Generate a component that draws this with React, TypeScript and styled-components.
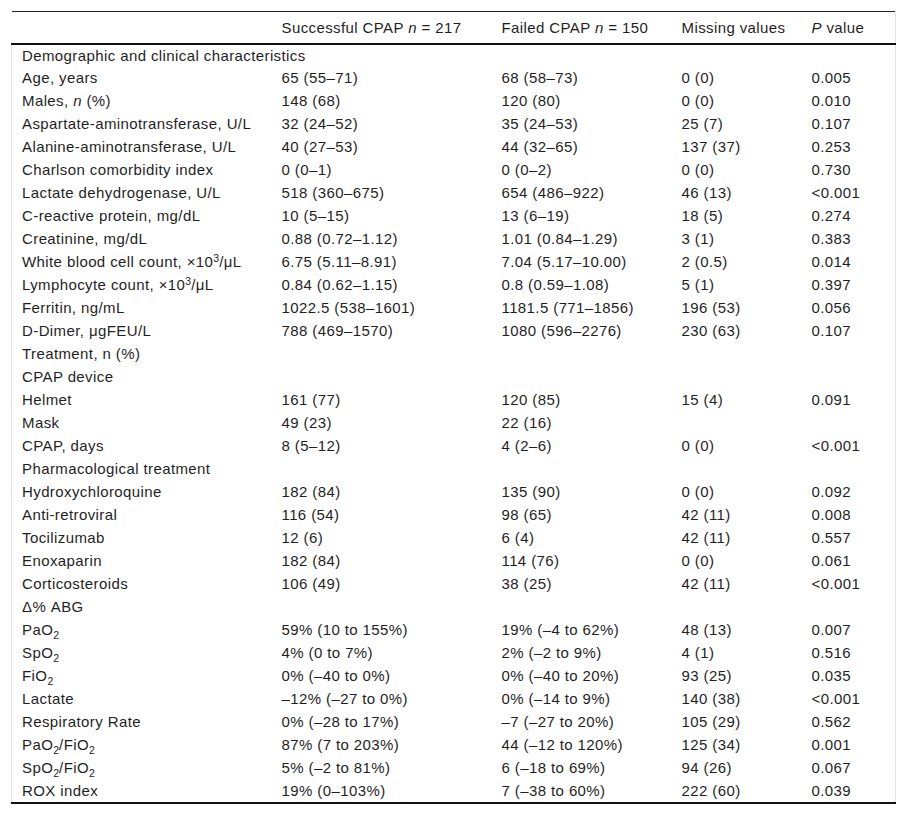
import React from 'react';
import styled, { createGlobalStyle } from 'styled-components';

const GlobalStyle = createGlobalStyle`
  html, body {
    margin: 0;
    padding: 0;
    background: #ffffff;
  }
  body {
    font-family: 'Liberation Sans', Arial, Helvetica, sans-serif;
    color: #1f1f1f;
  }
`;

const Page = styled.div`
  padding: 11px 0 0 11px;
  width: 883px;
`;

const Table = styled.table`
  width: 883px;
  border-collapse: collapse;
  table-layout: fixed;
  font-family: 'Liberation Sans', Arial, Helvetica, sans-serif;
  font-size: 15px;
  letter-spacing: 0.4px;
  color: #1f1f1f;
  border-top: 1px solid #222;
  border-bottom: 2px solid #111;
`;

const HeadRow = styled.tr`
  height: 32px;
  border-bottom: 2px solid #111;
`;

const HeadCell = styled.th<{ $w: number }>`
  width: ${(p) => p.$w}px;
  text-align: left;
  font-weight: 400;
  padding: 1px 0 0 10px;
  white-space: nowrap;
  vertical-align: middle;
  overflow: hidden;

  &:last-child {
    border-right: 1px solid #e4e4e4;
  }
`;

const Row = styled.tr`
  height: 23px;
`;

const Cell = styled.td`
  padding: 0 0 0 10px;
  white-space: nowrap;
  vertical-align: middle;
  line-height: 16px;

  &:first-child {
    border-left: 1px solid #e4e4e4;
  }
  &:last-child {
    border-right: 1px solid #e4e4e4;
  }
`;

const Sub = styled.sub`
  font-size: 10.5px;
  letter-spacing: 0;
  line-height: 0;
  vertical-align: baseline;
  position: relative;
  top: 4px;
`;

const Sup = styled.sup`
  font-size: 10.5px;
  letter-spacing: 0;
  line-height: 0;
  vertical-align: baseline;
  position: relative;
  top: -5px;
`;

const N = () => <i>n</i>;
const O2 = () => (
  <>
    O<Sub>2</Sub>
  </>
);

type RowData = [React.ReactNode, string?, string?, string?, string?];

const rows: RowData[] = [
  ['Demographic and clinical characteristics'],
  ['Age, years', '65 (55–71)', '68 (58–73)', '0 (0)', '0.005'],
  [<>Males, <N /> (%)</>, '148 (68)', '120 (80)', '0 (0)', '0.010'],
  ['Aspartate-aminotransferase, U/L', '32 (24–52)', '35 (24–53)', '25 (7)', '0.107'],
  ['Alanine-aminotransferase, U/L', '40 (27–53)', '44 (32–65)', '137 (37)', '0.253'],
  ['Charlson comorbidity index', '0 (0–1)', '0 (0–2)', '0 (0)', '0.730'],
  ['Lactate dehydrogenase, U/L', '518 (360–675)', '654 (486–922)', '46 (13)', '<0.001'],
  ['C-reactive protein, mg/dL', '10 (5–15)', '13 (6–19)', '18 (5)', '0.274'],
  ['Creatinine, mg/dL', '0.88 (0.72–1.12)', '1.01 (0.84–1.29)', '3 (1)', '0.383'],
  [<>White blood cell count, ×10<Sup>3</Sup>/μL</>, '6.75 (5.11–8.91)', '7.04 (5.17–10.00)', '2 (0.5)', '0.014'],
  [<>Lymphocyte count, ×10<Sup>3</Sup>/μL</>, '0.84 (0.62–1.15)', '0.8 (0.59–1.08)', '5 (1)', '0.397'],
  ['Ferritin, ng/mL', '1022.5 (538–1601)', '1181.5 (771–1856)', '196 (53)', '0.056'],
  ['D-Dimer, μgFEU/L', '788 (469–1570)', '1080 (596–2276)', '230 (63)', '0.107'],
  ['Treatment, n (%)'],
  ['CPAP device'],
  ['Helmet', '161 (77)', '120 (85)', '15 (4)', '0.091'],
  ['Mask', '49 (23)', '22 (16)', '', ''],
  ['CPAP, days', '8 (5–12)', '4 (2–6)', '0 (0)', '<0.001'],
  ['Pharmacological treatment'],
  ['Hydroxychloroquine', '182 (84)', '135 (90)', '0 (0)', '0.092'],
  ['Anti-retroviral', '116 (54)', '98 (65)', '42 (11)', '0.008'],
  ['Tocilizumab', '12 (6)', '6 (4)', '42 (11)', '0.557'],
  ['Enoxaparin', '182 (84)', '114 (76)', '0 (0)', '0.061'],
  ['Corticosteroids', '106 (49)', '38 (25)', '42 (11)', '<0.001'],
  ['Δ% ABG'],
  [<>Pa<O2 /></>, '59% (10 to 155%)', '19% (–4 to 62%)', '48 (13)', '0.007'],
  [<>Sp<O2 /></>, '4% (0 to 7%)', '2% (–2 to 9%)', '4 (1)', '0.516'],
  [<>Fi<O2 /></>, '0% (–40 to 0%)', '0% (–40 to 20%)', '93 (25)', '0.035'],
  ['Lactate', '–12% (–27 to 0%)', '0% (–14 to 9%)', '140 (38)', '<0.001'],
  ['Respiratory Rate', '0% (–28 to 17%)', '–7 (–27 to 20%)', '105 (29)', '0.562'],
  [<>Pa<O2 />/Fi<O2 /></>, '87% (7 to 203%)', '44 (–12 to 120%)', '125 (34)', '0.001'],
  [<>Sp<O2 />/Fi<O2 /></>, '5% (–2 to 81%)', '6 (–18 to 69%)', '94 (26)', '0.067'],
  ['ROX index', '19% (0–103%)', '7 (–38 to 60%)', '222 (60)', '0.039'],
];

export default function App() {
  return (
    <>
      <GlobalStyle />
      <Page>
        <Table>
          <thead>
            <HeadRow>
              <HeadCell $w={250} />
              <HeadCell $w={210}>
                Successful CPAP <N /> = 217
              </HeadCell>
              <HeadCell $w={170}>
                Failed CPAP <N /> = 150
              </HeadCell>
              <HeadCell $w={120}>Missing values</HeadCell>
              <HeadCell $w={83}>
                <i>P</i> value
              </HeadCell>
            </HeadRow>
          </thead>
          <tbody>
            {rows.map((r, i) => (
              <Row key={i}>
                <Cell>{r[0]}</Cell>
                <Cell>{r[1] ?? ''}</Cell>
                <Cell>{r[2] ?? ''}</Cell>
                <Cell>{r[3] ?? ''}</Cell>
                <Cell>{r[4] ?? ''}</Cell>
              </Row>
            ))}
          </tbody>
        </Table>
      </Page>
    </>
  );
}
